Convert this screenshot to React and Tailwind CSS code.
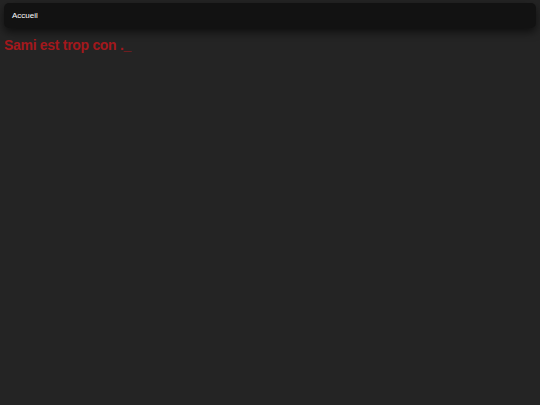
export default function App() {
  return (
    <div className="min-h-[405px] bg-[#242424] font-['Liberation_Sans',Arial,sans-serif]">
      <div className="px-1 pt-[3px]">
        <nav className="h-[25px] rounded-[5px] bg-[#121212] shadow-[0_4px_8px_rgba(0,0,0,0.6)] flex items-center px-2">
          <span className="text-[8px] text-white">Accueil</span>
        </nav>
      </div>
      <h1 className="mt-[10px] ml-1 text-[14px] font-bold text-[#a3181c] leading-none tracking-[-0.3px]">
        Sami est trop con ._
      </h1>
    </div>
  );
}
